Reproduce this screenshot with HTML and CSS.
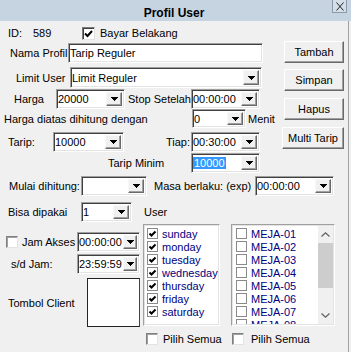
FILE: index.html
```html
<!DOCTYPE html>
<html>
<head>
<meta charset="utf-8">
<link rel="stylesheet" href="styles.css">
</head>
<body>
<div class="window">
  <div class="titlebar">
    <span class="title">Profil User</span>
    <span class="close"><svg width="8" height="9" viewBox="0 0 8 9"><path d="M0.5 0.5L7.5 8.5M7.5 0.5L0.5 8.5" stroke="#222" stroke-width="1" fill="none"/></svg></span>
  </div>
  <div class="body">
    <div class="top">
      <div class="form">
        <div class="row r-id">
          <span class="w-id">ID:</span><span class="w-num">589</span>
          <span class="cb cb13 checked"><svg width="9" height="9" viewBox="0 0 9 9"><path d="M1 4.5L3.5 7L8 2" stroke="#000" stroke-width="2" fill="none"/></svg></span>
          <span class="ml5">Bayar Belakang</span>
        </div>
        <div class="row r-nama">
          <span class="w-nama">Nama Profil</span>
          <div class="edit w-edit"><span class="val">Tarip Reguler</span></div>
        </div>
        <div class="row r-limit">
          <span class="w-limit">Limit User</span>
          <div class="combo w-limitc"><span class="val">Limit Reguler</span><span class="dd"><svg class="tri" width="7" height="4" viewBox="0 0 7 4"><path d="M0 0h7v1h-1v1h-1v1h-1v1h-1v-1h-1v-1h-1v-1h-1z"/></svg></span></div>
        </div>
        <div class="row r-harga">
          <span class="w-harga">Harga</span>
          <div class="combo w-69"><span class="val">20000</span><span class="dd"><svg class="tri" width="7" height="4" viewBox="0 0 7 4"><path d="M0 0h7v1h-1v1h-1v1h-1v1h-1v-1h-1v-1h-1v-1h-1z"/></svg></span></div>
          <span class="w-stop">Stop Setelah</span>
          <div class="combo w-69"><span class="val">00:00:00</span><span class="dd"><svg class="tri" width="7" height="4" viewBox="0 0 7 4"><path d="M0 0h7v1h-1v1h-1v1h-1v1h-1v-1h-1v-1h-1v-1h-1z"/></svg></span></div>
        </div>
        <div class="row r-diatas">
          <span class="w-diatas">Harga diatas dihitung dengan</span>
          <div class="combo w-54"><span class="val">0</span><span class="dd"><svg class="tri" width="7" height="4" viewBox="0 0 7 4"><path d="M0 0h7v1h-1v1h-1v1h-1v1h-1v-1h-1v-1h-1v-1h-1z"/></svg></span></div>
          <span class="ml2">Menit</span>
        </div>
        <div class="row r-tarip">
          <span class="w-tarip">Tarip:</span>
          <div class="combo w-71"><span class="val">10000</span><span class="dd"><svg class="tri" width="7" height="4" viewBox="0 0 7 4"><path d="M0 0h7v1h-1v1h-1v1h-1v1h-1v-1h-1v-1h-1v-1h-1z"/></svg></span></div>
          <span class="w-tiap">Tiap:</span>
          <div class="combo w-69"><span class="val">00:30:00</span><span class="dd"><svg class="tri" width="7" height="4" viewBox="0 0 7 4"><path d="M0 0h7v1h-1v1h-1v1h-1v1h-1v-1h-1v-1h-1v-1h-1z"/></svg></span></div>
        </div>
        <div class="row r-minim">
          <span class="w-minim">Tarip Minim</span>
          <div class="combo w-69"><span class="val"><span class="sel">10000</span></span><span class="dd"><svg class="tri" width="7" height="4" viewBox="0 0 7 4"><path d="M0 0h7v1h-1v1h-1v1h-1v1h-1v-1h-1v-1h-1v-1h-1z"/></svg></span></div>
        </div>
      </div>
      <div class="buttons">
        <div class="btn b-tambah">Tambah</div>
        <div class="btn b-simpan">Simpan</div>
        <div class="btn b-hapus">Hapus</div>
        <div class="btn b-multi">Multi Tarip</div>
      </div>
    </div>
    <div class="row r-mulai">
      <span class="w-mulai">Mulai dihitung:</span>
      <div class="combo w-66"><span class="val"></span><span class="dd"><svg class="tri" width="7" height="4" viewBox="0 0 7 4"><path d="M0 0h7v1h-1v1h-1v1h-1v1h-1v-1h-1v-1h-1v-1h-1z"/></svg></span></div>
      <span class="w-masa">Masa berlaku: (exp)</span>
      <div class="combo w-79"><span class="val">00:00:00</span><span class="dd"><svg class="tri" width="7" height="4" viewBox="0 0 7 4"><path d="M0 0h7v1h-1v1h-1v1h-1v1h-1v-1h-1v-1h-1v-1h-1z"/></svg></span></div>
    </div>
    <div class="row r-bisa">
      <span class="w-bisa">Bisa dipakai</span>
      <div class="combo w-51"><span class="val">1</span><span class="dd"><svg class="tri" width="7" height="4" viewBox="0 0 7 4"><path d="M0 0h7v1h-1v1h-1v1h-1v1h-1v-1h-1v-1h-1v-1h-1z"/></svg></span></div>
      <span class="ml12">User</span>
    </div>
    <div class="lower">
      <div class="lcol">
        <div class="row r-jam">
          <span class="cb cb12"></span>
          <span class="w-jam">Jam Akses</span>
          <div class="combo w-63"><span class="val">00:00:00</span><span class="dd"><svg class="tri" width="7" height="4" viewBox="0 0 7 4"><path d="M0 0h7v1h-1v1h-1v1h-1v1h-1v-1h-1v-1h-1v-1h-1z"/></svg></span></div>
        </div>
        <div class="row r-sd">
          <span class="w-sd">s/d Jam:</span>
          <div class="combo w-63"><span class="val">23:59:59</span><span class="dd"><svg class="tri" width="7" height="4" viewBox="0 0 7 4"><path d="M0 0h7v1h-1v1h-1v1h-1v1h-1v-1h-1v-1h-1v-1h-1z"/></svg></span></div>
        </div>
        <div class="row r-tombol">
          <span class="w-tombol">Tombol Client</span>
          <div class="tbox"></div>
        </div>
      </div>
      <div class="list days">
        <div class="item"><span class="cb cb11"><svg width="9" height="9" viewBox="0 0 9 9"><path d="M1.5 4.5L3.5 6.5L7.5 2.5" stroke="#000" stroke-width="2" fill="none"/></svg></span><span class="itxt">sunday</span></div>
        <div class="item"><span class="cb cb11"><svg width="9" height="9" viewBox="0 0 9 9"><path d="M1.5 4.5L3.5 6.5L7.5 2.5" stroke="#000" stroke-width="2" fill="none"/></svg></span><span class="itxt">monday</span></div>
        <div class="item"><span class="cb cb11"><svg width="9" height="9" viewBox="0 0 9 9"><path d="M1.5 4.5L3.5 6.5L7.5 2.5" stroke="#000" stroke-width="2" fill="none"/></svg></span><span class="itxt">tuesday</span></div>
        <div class="item"><span class="cb cb11"><svg width="9" height="9" viewBox="0 0 9 9"><path d="M1.5 4.5L3.5 6.5L7.5 2.5" stroke="#000" stroke-width="2" fill="none"/></svg></span><span class="itxt">wednesday</span></div>
        <div class="item"><span class="cb cb11"><svg width="9" height="9" viewBox="0 0 9 9"><path d="M1.5 4.5L3.5 6.5L7.5 2.5" stroke="#000" stroke-width="2" fill="none"/></svg></span><span class="itxt">thursday</span></div>
        <div class="item"><span class="cb cb11"><svg width="9" height="9" viewBox="0 0 9 9"><path d="M1.5 4.5L3.5 6.5L7.5 2.5" stroke="#000" stroke-width="2" fill="none"/></svg></span><span class="itxt">friday</span></div>
        <div class="item"><span class="cb cb11"><svg width="9" height="9" viewBox="0 0 9 9"><path d="M1.5 4.5L3.5 6.5L7.5 2.5" stroke="#000" stroke-width="2" fill="none"/></svg></span><span class="itxt">saturday</span></div>
      </div>
      <div class="list meja">
        <div class="items">
          <div class="item"><span class="cb cb11"></span><span class="itxt">MEJA-01</span></div>
          <div class="item"><span class="cb cb11"></span><span class="itxt">MEJA-02</span></div>
          <div class="item"><span class="cb cb11"></span><span class="itxt">MEJA-03</span></div>
          <div class="item"><span class="cb cb11"></span><span class="itxt">MEJA-04</span></div>
          <div class="item"><span class="cb cb11"></span><span class="itxt">MEJA-05</span></div>
          <div class="item"><span class="cb cb11"></span><span class="itxt">MEJA-06</span></div>
          <div class="item"><span class="cb cb11"></span><span class="itxt">MEJA-07</span></div>
          <div class="item"><span class="cb cb11"></span><span class="itxt">MEJA-08</span></div>
        </div>
        <div class="sbar">
          <div class="arrow"><svg width="9" height="5" viewBox="0 0 9 5"><path d="M0.5 4.5L4.5 0.8L8.5 4.5" stroke="#606060" stroke-width="1.2" fill="none"/></svg></div>
          <div class="thumb"></div>
          <div class="track"></div>
          <div class="arrow"><svg width="9" height="5" viewBox="0 0 9 5"><path d="M0.5 0.5L4.5 4.2L8.5 0.5" stroke="#606060" stroke-width="1.2" fill="none"/></svg></div>
        </div>
      </div>
    </div>
    <div class="row r-pilih">
      <span class="cb cb12 p1"></span><span class="w-pilih">Pilih Semua</span>
      <span class="cb cb12"></span><span class="ml7">Pilih Semua</span>
    </div>
  </div>
</div>
</body>
</html>
```
FILE: styles.css
```css
* { box-sizing: border-box; }
body {
  margin: 0;
  background: #f0f0f0;
  font: 11px "Liberation Sans", Arial, sans-serif;
  color: #000;
}
.window { width: 351px; height: 352px; overflow: hidden; }
.titlebar {
  height: 21px;
  background: #c6d3e0;
  display: flex;
  align-items: flex-start;
}
.title {
  flex: 1;
  text-align: center;
  font-weight: bold;
  font-size: 12px;
  line-height: 14px;
  padding-top: 6px;
  padding-left: 16px;
}
.close {
  width: 15px;
  height: 13px;
  margin-right: 4px;
  border: 1px solid #8c9aa8;
  border-top: none;
  background: #d4dee8;
  display: flex;
  align-items: center;
  justify-content: center;
}
.body {
  width: 349px;
  height: 331px;
  border-right: 1px solid #a0a0a0;
}
.top { display: flex; }
.form { width: 280px; }
.buttons {
  width: 64px;
  display: flex;
  flex-direction: column;
  align-items: flex-end;
}
.row { display: flex; align-items: center; white-space: nowrap; }

.btn {
  width: 60px;
  height: 22px;
  background: #f0f0f0;
  border: 1px solid;
  border-color: #fff #696969 #696969 #fff;
  box-shadow: inset -1px -1px 0 #a0a0a0;
  display: flex;
  align-items: center;
  justify-content: center;
  padding-bottom: 1px;
}
.b-tambah { margin-top: 20px; }
.b-simpan { margin-top: 6px; }
.b-hapus { margin-top: 7px; }
.b-multi { margin-top: 7px; width: 62px; }

.edit, .combo {
  display: flex;
  background: #fff;
  border: 1px solid;
  border-color: #a0a0a0 #fff #fff #a0a0a0;
  box-shadow: inset 1px 1px 0 #404040, inset -1px -1px 0 #e3e3e3;
  padding: 2px 2px 2px 1px;
  height: 100%;
}
.val { flex: 1; align-self: center; padding-left: 0; overflow: hidden; }
.sel { background: #3399ff; color: #fff; padding: 0 1px; }
.dd {
  width: 16px;
  flex: none;
  background: #f0f0f0;
  border: 1px solid;
  border-color: #f8f8f8 #696969 #696969 #f8f8f8;
  box-shadow: inset -1px -1px 0 #a0a0a0;
  display: flex;
  align-items: center;
  justify-content: center;
}
.w-63 .dd { width: 14px; }
.tri { display: block; fill: #000; shape-rendering: crispEdges; }

.cb {
  display: flex;
  align-items: center;
  justify-content: center;
  background: #fff;
  border: 1px solid;
  flex: none;
}
.cb13 { width: 13px; height: 13px; border-color: #7a7a7a #e3e3e3 #e3e3e3 #7a7a7a; box-shadow: inset 1px 1px 0 #404040; }
.cb12 { width: 12px; height: 12px; border-color: #808080 #e3e3e3 #e3e3e3 #808080; box-shadow: inset 1px 1px 0 #a0a0a0; }
.cb11 { width: 11px; height: 11px; border-color: #8a8a8a; }

/* row positions */
.r-id { margin-top: 5px; height: 14px; padding-left: 8px; }
.w-id { width: 25px; }
.w-num { width: 49px; }
.ml5 { margin-left: 5px; }
.r-nama { margin-top: 3px; height: 20px; padding-left: 10px; }
.w-nama { width: 58px; }
.w-edit { width: 195px; }
.r-limit { margin-top: 4px; height: 21px; padding-left: 16px; }
.w-limit { width: 54px; }
.w-limitc { width: 192px; }
.r-harga { margin-top: 1px; height: 20px; padding-left: 14px; }
.w-harga { width: 42px; }
.w-stop { width: 66px; padding-left: 3px; }
.w-69 { width: 69px; }
.r-diatas { margin-top: 0; height: 19px; padding-left: 4px; }
.w-diatas { width: 188px; }
.w-54 { width: 54px; }
.ml2 { margin-left: 2px; }
.r-tarip { margin-top: 4px; height: 20px; padding-left: 8px; }
.w-tarip { width: 45px; }
.w-71 { width: 71px; }
.w-tiap { width: 67px; padding-left: 42px; }
.r-minim { margin-top: 1px; height: 20px; padding-left: 108px; }
.w-minim { width: 83px; }
.r-mulai { margin-top: 3px; height: 20px; padding-left: 9px; }
.w-mulai { width: 72px; }
.w-66 { width: 66px; }
.w-masa { width: 108px; padding-left: 7px; }
.w-79 { width: 79px; }
.r-bisa { margin-top: 6px; height: 20px; padding-left: 8px; }
.w-bisa { width: 73px; }
.w-51 { width: 51px; }
.ml12 { margin-left: 12px; }

.lower { display: flex; margin-top: 2px; height: 102px; }
.lcol { width: 143px; }
.r-jam { margin-top: 8px; height: 20px; padding-left: 6px; }
.w-jam { width: 59px; padding-left: 4px; }
.w-63 { width: 63px; }
.r-sd { margin-top: 2px; height: 20px; padding-left: 11px; }
.w-sd { width: 66px; }
.r-tombol { margin-top: 4px; height: 49px; padding-left: 8px; }
.w-tombol { width: 79px; }
.tbox { width: 53px; height: 49px; background: #fff; border: 1px solid #222; border-right-color: #444; }

.list {
  background: #fff;
  border: 1px solid;
  border-color: #a0a0a0 #fff #fff #a0a0a0;
  box-shadow: inset 1px 1px 0 #e3e3e3, inset -1px -1px 0 #e3e3e3;
  height: 102px;
  overflow: hidden;
  padding: 2px 1px 1px 1px;
}
.days { width: 77px; padding-left: 3px; }
.meja { width: 104px; margin-left: 11px; display: flex; padding-left: 4px; padding-top: 1px; padding-bottom: 1px; }
.items { flex: 1; padding-top: 1px; overflow: hidden; }
.item { height: 13px; display: flex; align-items: center; }
.itxt { margin-left: 4px; color: #000080; }
.sbar { width: 15px; display: flex; flex-direction: column; background: #f0f0f0; }
.arrow { height: 17px; display: flex; align-items: center; justify-content: center; }
.thumb { height: 45px; background: #cdcdcd; }
.track { flex: 1; }

.r-pilih { margin-top: 7px; height: 12px; }
.p1 { margin-left: 146px; }
.w-pilih { width: 74px; padding-left: 5px; }
.ml7 { margin-left: 7px; }
```
